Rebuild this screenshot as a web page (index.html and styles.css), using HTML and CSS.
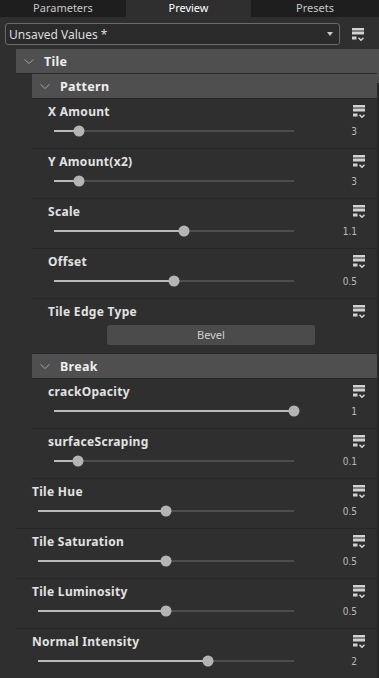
FILE: index.html
```html
<!DOCTYPE html>
<html lang="en">
<head>
    <meta charset="UTF-8">
    <meta name="viewport" content="width=device-width, initial-scale=1.0">
    <title>Preview</title>
    <link rel="stylesheet" href="styles.css">
</head>
<body>
    <div class="tabs">
        <div class="tab">Parameters</div>
        <div class="tab active">Preview</div>
        <div class="tab">Presets</div>
    </div>

    <div class="toolbar">
        <div class="preset-select">
            <span class="preset-name">Unsaved Values *</span>
            <span class="caret"></span>
        </div>
        <svg class="menu-icon" viewBox="0 0 12 13"><rect x="0" y="0" width="12" height="2"/><rect x="0" y="4" width="12" height="2"/><rect x="0" y="9" width="4" height="2"/><polyline points="6.5,9.8 9,12.3 11.5,9.8" fill="none" stroke-width="1.5"/></svg>
    </div>

    <div class="panel">
        <div class="tree">
            <div class="group">
                <div class="group-head"><svg class="chevron" viewBox="0 0 10 5"><polyline points="0.5,0.5 5,4.5 9.5,0.5"/></svg>Tile</div>
                <div class="group-body">

                    <div class="group">
                        <div class="group-head"><svg class="chevron" viewBox="0 0 10 5"><polyline points="0.5,0.5 5,4.5 9.5,0.5"/></svg>Pattern</div>
                        <div class="row">
                            <div class="row-head"><span class="row-label">X Amount</span><svg class="menu-icon" viewBox="0 0 12 13"><rect x="0" y="0" width="12" height="2"/><rect x="0" y="4" width="12" height="2"/><rect x="0" y="9" width="4" height="2"/><polyline points="6.5,9.8 9,12.3 11.5,9.8" fill="none" stroke-width="1.5"/></svg></div>
                            <div class="slider" style="--v:0.104"><div class="track"><div class="fill"></div><div class="knob"></div></div><span class="value">3</span></div>
                        </div>
                        <div class="row">
                            <div class="row-head"><span class="row-label">Y Amount(x2)</span><svg class="menu-icon" viewBox="0 0 12 13"><rect x="0" y="0" width="12" height="2"/><rect x="0" y="4" width="12" height="2"/><rect x="0" y="9" width="4" height="2"/><polyline points="6.5,9.8 9,12.3 11.5,9.8" fill="none" stroke-width="1.5"/></svg></div>
                            <div class="slider" style="--v:0.104"><div class="track"><div class="fill"></div><div class="knob"></div></div><span class="value">3</span></div>
                        </div>
                        <div class="row">
                            <div class="row-head"><span class="row-label">Scale</span><svg class="menu-icon" viewBox="0 0 12 13"><rect x="0" y="0" width="12" height="2"/><rect x="0" y="4" width="12" height="2"/><rect x="0" y="9" width="4" height="2"/><polyline points="6.5,9.8 9,12.3 11.5,9.8" fill="none" stroke-width="1.5"/></svg></div>
                            <div class="slider" style="--v:0.542"><div class="track"><div class="fill"></div><div class="knob"></div></div><span class="value">1.1</span></div>
                        </div>
                        <div class="row">
                            <div class="row-head"><span class="row-label">Offset</span><svg class="menu-icon" viewBox="0 0 12 13"><rect x="0" y="0" width="12" height="2"/><rect x="0" y="4" width="12" height="2"/><rect x="0" y="9" width="4" height="2"/><polyline points="6.5,9.8 9,12.3 11.5,9.8" fill="none" stroke-width="1.5"/></svg></div>
                            <div class="slider" style="--v:0.5"><div class="track"><div class="fill"></div><div class="knob"></div></div><span class="value">0.5</span></div>
                        </div>
                        <div class="row">
                            <div class="row-head"><span class="row-label">Tile Edge Type</span><svg class="menu-icon" viewBox="0 0 12 13"><rect x="0" y="0" width="12" height="2"/><rect x="0" y="4" width="12" height="2"/><rect x="0" y="9" width="4" height="2"/><polyline points="6.5,9.8 9,12.3 11.5,9.8" fill="none" stroke-width="1.5"/></svg></div>
                            <div class="enum-button">Bevel</div>
                        </div>
                    </div>

                    <div class="group">
                        <div class="group-head"><svg class="chevron" viewBox="0 0 10 5"><polyline points="0.5,0.5 5,4.5 9.5,0.5"/></svg>Break</div>
                        <div class="row">
                            <div class="row-head"><span class="row-label">crackOpacity</span><svg class="menu-icon" viewBox="0 0 12 13"><rect x="0" y="0" width="12" height="2"/><rect x="0" y="4" width="12" height="2"/><rect x="0" y="9" width="4" height="2"/><polyline points="6.5,9.8 9,12.3 11.5,9.8" fill="none" stroke-width="1.5"/></svg></div>
                            <div class="slider" style="--v:1"><div class="track"><div class="fill"></div><div class="knob"></div></div><span class="value">1</span></div>
                        </div>
                        <div class="row">
                            <div class="row-head"><span class="row-label">surfaceScraping</span><svg class="menu-icon" viewBox="0 0 12 13"><rect x="0" y="0" width="12" height="2"/><rect x="0" y="4" width="12" height="2"/><rect x="0" y="9" width="4" height="2"/><polyline points="6.5,9.8 9,12.3 11.5,9.8" fill="none" stroke-width="1.5"/></svg></div>
                            <div class="slider" style="--v:0.1"><div class="track"><div class="fill"></div><div class="knob"></div></div><span class="value">0.1</span></div>
                        </div>
                    </div>

                </div>
            </div>

            <div class="row">
                <div class="row-head"><span class="row-label">Tile Hue</span><svg class="menu-icon" viewBox="0 0 12 13"><rect x="0" y="0" width="12" height="2"/><rect x="0" y="4" width="12" height="2"/><rect x="0" y="9" width="4" height="2"/><polyline points="6.5,9.8 9,12.3 11.5,9.8" fill="none" stroke-width="1.5"/></svg></div>
                <div class="slider" style="--v:0.5"><div class="track"><div class="fill"></div><div class="knob"></div></div><span class="value">0.5</span></div>
            </div>
            <div class="row">
                <div class="row-head"><span class="row-label">Tile Saturation</span><svg class="menu-icon" viewBox="0 0 12 13"><rect x="0" y="0" width="12" height="2"/><rect x="0" y="4" width="12" height="2"/><rect x="0" y="9" width="4" height="2"/><polyline points="6.5,9.8 9,12.3 11.5,9.8" fill="none" stroke-width="1.5"/></svg></div>
                <div class="slider" style="--v:0.5"><div class="track"><div class="fill"></div><div class="knob"></div></div><span class="value">0.5</span></div>
            </div>
            <div class="row">
                <div class="row-head"><span class="row-label">Tile Luminosity</span><svg class="menu-icon" viewBox="0 0 12 13"><rect x="0" y="0" width="12" height="2"/><rect x="0" y="4" width="12" height="2"/><rect x="0" y="9" width="4" height="2"/><polyline points="6.5,9.8 9,12.3 11.5,9.8" fill="none" stroke-width="1.5"/></svg></div>
                <div class="slider" style="--v:0.5"><div class="track"><div class="fill"></div><div class="knob"></div></div><span class="value">0.5</span></div>
            </div>
            <div class="row">
                <div class="row-head"><span class="row-label">Normal Intensity</span><svg class="menu-icon" viewBox="0 0 12 13"><rect x="0" y="0" width="12" height="2"/><rect x="0" y="4" width="12" height="2"/><rect x="0" y="9" width="4" height="2"/><polyline points="6.5,9.8 9,12.3 11.5,9.8" fill="none" stroke-width="1.5"/></svg></div>
                <div class="slider" style="--v:0.664"><div class="track"><div class="fill"></div><div class="knob"></div></div><span class="value">2</span></div>
            </div>
        </div>
        <div class="scrollbar"><div class="thumb"></div></div>
    </div>
</body>
</html>
```

FILE: styles.css
```css
body {
    margin: 0;
    width: 379px;
    height: 678px;
    overflow: hidden;
    background-color: #2f2f2f;
    font-family: "Noto Sans", sans-serif;
    color: #ddd;
}
/* Tab strip */
.tabs {
    display: grid;
    grid-template-columns: 126px 125px 128px;
    height: 17px;
    background-color: #1e1e1e;
    font-size: 11px;
}
.tab {
    text-align: center;
    line-height: 16px;
    color: #c8c8c8;
}
.tab.active {
    background-color: #2f2f2f;
    color: #fff;
}
/* Preset row */
.toolbar {
    display: flex;
    align-items: center;
    gap: 12px;
    padding: 6px 0 4px 5px;
}
.preset-select {
    display: flex;
    align-items: center;
    box-sizing: border-box;
    width: 335px;
    height: 22px;
    padding: 0 6px 0 3px;
    border: 1px solid #6a6a6a;
    border-radius: 3px;
    background-color: #2a2a2a;
    font-size: 12px;
    color: #ddd;
}
.preset-name {
    flex: 1;
}
.caret {
    border-left: 3px solid transparent;
    border-right: 3px solid transparent;
    border-top: 4px solid #c8c8c8;
}
.menu-icon {
    width: 12px;
    height: 13px;
    fill: #d2d2d2;
    stroke: #d2d2d2;
    flex-shrink: 0;
}
/* Tree */
.panel {
    display: flex;
    height: 629px;
    overflow: hidden;
}
.tree {
    flex: 1;
    padding-left: 16px;
}
.scrollbar {
    width: 2px;
    background-color: #272727;
}
.scrollbar .thumb {
    height: 34px;
    background-color: #4f4f4f;
}
.group-head {
    display: flex;
    align-items: center;
    height: 24px;
    padding-left: 8px;
    border-bottom: 1px solid #272727;
    background-color: #4f4f4f;
    font-size: 12.5px;
    font-weight: bold;
    color: #eee;
    letter-spacing: 0.3px;
}
.chevron {
    width: 10px;
    height: 5px;
    margin-right: 10px;
    fill: none;
    stroke: #a0a0a0;
    stroke-width: 1;
}
.group-body {
    margin-left: 16px;
}
.row {
    padding: 4px 12px 5px 0;
    border-bottom: 1px solid #272727;
}
.row-head {
    display: flex;
    align-items: center;
    height: 16px;
    padding-left: 16px;
}
.row-label {
    flex: 1;
    font-size: 12px;
    font-weight: bold;
    color: #e2e2e2;
    letter-spacing: 0.3px;
}
/* Slider */
.slider {
    display: flex;
    align-items: center;
    height: 24px;
    padding-left: 22px;
    margin-right: 8px;
}
.track {
    position: relative;
    flex: 1;
    height: 2px;
    background-color: #4d4d4d;
}
.fill {
    width: calc(var(--v) * 100%);
    height: 100%;
    background-color: #bababa;
}
.knob {
    position: absolute;
    top: 50%;
    left: calc(var(--v) * 100%);
    width: 11px;
    height: 11px;
    border-radius: 50%;
    background-color: #b4b4b4;
    transform: translate(-50%, -50%);
}
.value {
    width: 63px;
    text-align: right;
    font-family: "DejaVu Sans Condensed", "DejaVu Sans", sans-serif;
    font-size: 10px;
    color: #bbb;
}
.enum-button {
    width: 208px;
    height: 20px;
    margin: 6px 0 3px 75px;
    border-radius: 3px;
    background-color: #4b4b4b;
    text-align: center;
    line-height: 20px;
    font-size: 11px;
    color: #cfcfcf;
}
```
